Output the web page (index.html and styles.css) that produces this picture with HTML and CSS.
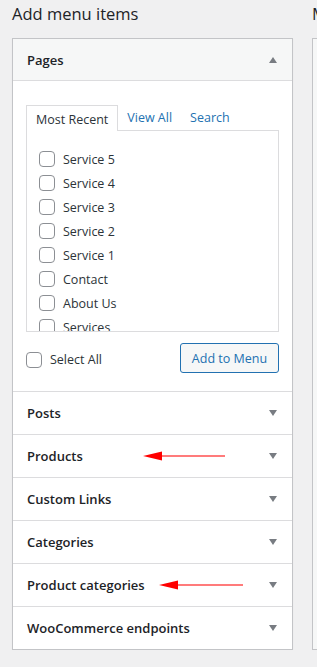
FILE: index.html
```html
<!DOCTYPE html>
<html lang="en">
<head>
  <meta charset="UTF-8" />
  <meta name="viewport" content="width=device-width, initial-scale=1.0" />
  <title>Menus</title>
  <link rel="stylesheet" href="styles.css">
</head>
<body>

  <div class="columns">
    <div class="menu-settings">
      <h2>Add menu items</h2>

      <div class="accordion">
        <div class="section open">
          <div class="section-title">
            <span>Pages</span>
            <span class="toggle up"></span>
          </div>
          <div class="section-body">
            <ul class="tabs">
              <li class="active">Most Recent</li>
              <li><a href="#">View All</a></li>
              <li><a href="#">Search</a></li>
            </ul>
            <div class="tab-panel">
              <ul class="checklist">
                <li><span class="check"></span>Service 5</li>
                <li><span class="check"></span>Service 4</li>
                <li><span class="check"></span>Service 3</li>
                <li><span class="check"></span>Service 2</li>
                <li><span class="check"></span>Service 1</li>
                <li><span class="check"></span>Contact</li>
                <li><span class="check"></span>About Us</li>
                <li><span class="check"></span>Services</li>
              </ul>
            </div>
            <div class="button-row">
              <label class="select-all"><span class="check"></span>Select All</label>
              <button class="add-btn">Add to Menu</button>
            </div>
          </div>
        </div>

        <div class="section">
          <div class="section-title"><span>Posts</span><span class="toggle"></span></div>
        </div>
        <div class="section">
          <div class="section-title">
            <span>Products</span><span class="toggle"></span>
            <svg class="note-arrow arrow-products" width="84" height="12" viewBox="0 0 84 12">
              <line x1="18" y1="6" x2="82" y2="6" stroke="#ff7b7b" stroke-width="2" />
              <polygon points="0,6 19,1.5 19,10.5" fill="#ff0000" />
            </svg>
          </div>
        </div>
        <div class="section">
          <div class="section-title"><span>Custom Links</span><span class="toggle"></span></div>
        </div>
        <div class="section">
          <div class="section-title"><span>Categories</span><span class="toggle"></span></div>
        </div>
        <div class="section">
          <div class="section-title">
            <span>Product categories</span><span class="toggle"></span>
            <svg class="note-arrow arrow-categories" width="86" height="12" viewBox="0 0 86 12">
              <line x1="18" y1="6" x2="84" y2="6" stroke="#ff7b7b" stroke-width="2" />
              <polygon points="0,6 19,1.5 19,10.5" fill="#ff0000" />
            </svg>
          </div>
        </div>
        <div class="section">
          <div class="section-title"><span>WooCommerce endpoints</span><span class="toggle"></span></div>
        </div>
      </div>
    </div>

    <div class="menu-management">
      <h2>Menu structure</h2>
      <div class="structure-box"></div>
    </div>
  </div>

</body>
</html>
```

FILE: styles.css
```css
* {
  margin: 0;
  padding: 0;
  box-sizing: border-box;
}

body {
  background-color: #f0f0f1;
  color: #1d2327;
  font-family: 'Open Sans', 'Noto Sans', sans-serif;
  font-size: 12.5px;
  overflow: hidden;
}

.columns {
  display: flex;
  gap: 19px;
  padding-left: 12px;
}

h2 {
  font-size: 16.5px;
  font-weight: 500;
  line-height: 27px;
  height: 38px;
  white-space: nowrap;
  color: #1d2327;
}

.menu-settings {
  width: 281px;
  flex-shrink: 0;
}

.accordion {
  border: 1px solid #c3c4c7;
  background: #fff;
  box-shadow: 0 1px 1px rgba(0, 0, 0, 0.06);
}

.section + .section {
  border-top: 1px solid #dcdcde;
}

.section-title {
  position: relative;
  height: 42px;
  display: flex;
  align-items: center;
  justify-content: space-between;
  padding: 0 14px 0 14px;
  font-size: 13px;
  font-weight: 600;
}

.section.open .section-title {
  background: #f6f7f7;
  border-bottom: 1px solid #dcdcde;
}

.toggle {
  width: 0;
  height: 0;
  border-left: 4px solid transparent;
  border-right: 4px solid transparent;
  border-top: 6px solid #787c82;
  margin-right: 1px;
}

.toggle.up {
  border-top: none;
  border-bottom: 6px solid #787c82;
}

.section-body {
  padding: 24px 13px 18px;
}

.tabs {
  list-style: none;
  display: flex;
  align-items: flex-end;
  height: 25px;
}

.tabs li {
  padding: 0 9px;
  line-height: 27px;
  height: 26px;
  font-size: 12.5px;
}

.tabs li.active {
  border: 1px solid #dcdcde;
  border-bottom: none;
  background: #fff;
  margin-bottom: -1px;
  position: relative;
  z-index: 1;
  color: #2c3338;
}

.tabs li a {
  color: #2271b1;
  text-decoration: none;
}

.tab-panel {
  border: 1px solid #dcdcde;
  height: 202px;
  overflow: hidden;
  padding: 16px 12px 0;
}

.checklist {
  list-style: none;
}

.checklist li {
  display: flex;
  align-items: center;
  height: 24px;
  gap: 8px;
  color: #2c3338;
}

.check {
  width: 16px;
  height: 16px;
  border: 1px solid #8c8f94;
  border-radius: 4px;
  background: #fff;
  flex-shrink: 0;
}

.button-row {
  display: flex;
  justify-content: space-between;
  align-items: center;
  margin-top: 11px;
}

.select-all {
  display: flex;
  align-items: center;
  gap: 8px;
  margin-top: 3px;
  color: #2c3338;
}

.add-btn {
  font-family: inherit;
  font-size: 12.5px;
  color: #2271b1;
  background: #f6f7f7;
  border: 1px solid #2271b1;
  border-radius: 3px;
  height: 30px;
  padding: 0 10px;
  width: 99px;
}

/* annotation arrows */
.note-arrow {
  position: absolute;
  top: 15px;
}

.arrow-products {
  left: 130px;
}

.arrow-categories {
  left: 146px;
}

.menu-management {
  width: 300px;
  flex-shrink: 0;
}

.structure-box {
  border: 1px solid #c3c4c7;
  background: #f6f7f7;
  height: 612px;
}
```
